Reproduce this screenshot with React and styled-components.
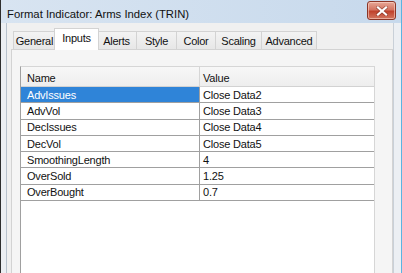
import React from 'react';
import styled, { createGlobalStyle } from 'styled-components';

const GlobalStyle = createGlobalStyle`
  html, body {
    margin: 0;
    padding: 0;
    background: #ffffff;
  }
  body {
    font-family: "Liberation Sans", Arial, sans-serif;
    font-size: 11px;
    color: #000000;
  }
`;

const Window = styled.div`
  width: 402px;
  height: 273px;
  box-sizing: border-box;
  display: flex;
  flex-direction: column;
  overflow: hidden;
  background: #eceff3;
  border-left: 1px solid #2e2e2e;
  border-right: 1px solid #5ab4e2;
`;

const TitleBar = styled.div`
  height: 23px;
  flex: none;
  display: flex;
  align-items: center;
  justify-content: space-between;
  padding: 0 5px 0 6px;
  background: linear-gradient(to right, #d8e4f1, #c7d9ec);

  .title {
    font-size: 11.3px;
    color: #111111;
    padding-top: 5px;
  }
`;

const CloseButton = styled.div`
  width: 27px;
  height: 17px;
  margin-top: 1px;
  align-self: flex-start;
  display: flex;
  align-items: center;
  justify-content: center;
  border: 1px solid #8b3526;
  border-radius: 3px;
  box-shadow: inset 0 0 0 1px rgba(255, 220, 210, 0.55);
  background: linear-gradient(to bottom, #e7a897 0%, #d47461 45%, #c0422c 55%, #d2765f 100%);
`;

const Frame = styled.div`
  flex: 1;
  display: flex;
  padding: 0 7px 0 5px;
  min-height: 0;
`;

const Client = styled.div`
  flex: 1;
  display: flex;
  flex-direction: column;
  background: #f0f0f0;
  border-left: 1px solid #b8c2cd;
  border-right: 1px solid #c9d0d8;
  padding: 6px 0 0 4px;
`;

const TabStrip = styled.div`
  display: flex;
  align-items: flex-end;
  padding-left: 2px;
  height: 21px;
  position: relative;
  z-index: 1;
  margin-bottom: -1px;
`;

const Tab = styled.div`
  box-sizing: border-box;
  width: ${p => p.$w + (p.$active ? 4 : 0)}px;
  height: ${p => (p.$active ? 22 : 19)}px;
  margin: 0 ${p => (p.$active ? -2 : 0)}px;
  display: flex;
  justify-content: center;
  align-items: center;
  padding-bottom: ${p => (p.$active ? 3 : 0)}px;
  border: 1px solid #d3d3d3;
  border-bottom: ${p => (p.$active ? 'none' : '1px solid #d3d3d3')};
  border-left-width: ${p => (p.$first || p.$active ? 1 : 0)}px;
  background: ${p => (p.$active ? '#ffffff' : 'linear-gradient(to bottom, #f3f3f3, #e7e7e7)')};
  position: relative;
  z-index: ${p => (p.$active ? 2 : 1)};
  font-size: 11px;
  letter-spacing: -0.25px;
  color: #111111;
`;

const Panel = styled.div`
  flex: none;
  height: 260px;
  background: #f5f5f5;
  border: 1px solid #d3d3d3;
  padding: 16px 17px 0 8px;
`;

const Grid = styled.div`
  width: 355px;
  height: 240px;
  box-sizing: border-box;
  background: #ffffff;
  border-left: 1px solid #a0a0a0;
  border-right: 1px solid #d6d6d6;
  border-top: 1px solid #d6d6d6;
`;

const Row = styled.div`
  display: grid;
  grid-template-columns: 179px 1fr;
  height: ${p => (p.$header ? 20 : 16.3)}px;
  box-sizing: border-box;
  border-bottom: 1px solid ${p => (p.$header ? '#d2d2d2' : '#a0a0a0')};
  background: ${p => (p.$header ? 'linear-gradient(to bottom, #f7f7f7, #eeeeee)' : '#ffffff')};
`;

const Cell = styled.div`
  box-sizing: border-box;
  display: flex;
  align-items: center;
  padding-left: ${p => (p.$value ? 3 : 6)}px;
  padding-top: ${p => (p.$header ? 3 : 0)}px;
  border-right: ${p => (p.$value ? 'none' : `1px solid ${p.$header ? '#d6d6d6' : '#a0a0a0'}`)};
  background: ${p => (p.$selected ? '#2f84d8' : 'transparent')};
  color: ${p => (p.$selected ? '#ffffff' : '#111111')};
  font-size: 11px;
  letter-spacing: -0.2px;
  white-space: nowrap;
`;

const tabs = [
  { label: 'General', w: 43 },
  { label: 'Inputs', w: 41, active: true },
  { label: 'Alerts', w: 40 },
  { label: 'Style', w: 40 },
  { label: 'Color', w: 39 },
  { label: 'Scaling', w: 46 },
  { label: 'Advanced', w: 55 },
];

const inputs = [
  ['AdvIssues', 'Close Data2'],
  ['AdvVol', 'Close Data3'],
  ['DecIssues', 'Close Data4'],
  ['DecVol', 'Close Data5'],
  ['SmoothingLength', '4'],
  ['OverSold', '1.25'],
  ['OverBought', '0.7'],
];

const CloseIcon = () => (
  <svg width="12" height="10" viewBox="0 0 12 10">
    <path d="M2 1.5 L10 8.5 M10 1.5 L2 8.5" stroke="#5a1a10" strokeWidth="3.6" strokeLinecap="square" opacity="0.45" />
    <path d="M2 1.5 L10 8.5 M10 1.5 L2 8.5" stroke="#ffffff" strokeWidth="2.2" strokeLinecap="square" />
  </svg>
);

export default function App() {
  return (
    <>
      <GlobalStyle />
      <Window>
        <TitleBar>
          <span className="title">Format Indicator: Arms Index (TRIN)</span>
          <CloseButton><CloseIcon /></CloseButton>
        </TitleBar>
        <Frame>
          <Client>
            <TabStrip>
              {tabs.map((t, i) => (
                <Tab key={t.label} $w={t.w} $active={t.active} $first={i === 0}>{t.label}</Tab>
              ))}
            </TabStrip>
            <Panel>
              <Grid>
                <Row $header>
                  <Cell $header>Name</Cell>
                  <Cell $header $value>Value</Cell>
                </Row>
                {inputs.map(([name, value], i) => (
                  <Row key={name}>
                    <Cell $selected={i === 0}>{name}</Cell>
                    <Cell $value>{value}</Cell>
                  </Row>
                ))}
              </Grid>
            </Panel>
          </Client>
        </Frame>
      </Window>
    </>
  );
}
